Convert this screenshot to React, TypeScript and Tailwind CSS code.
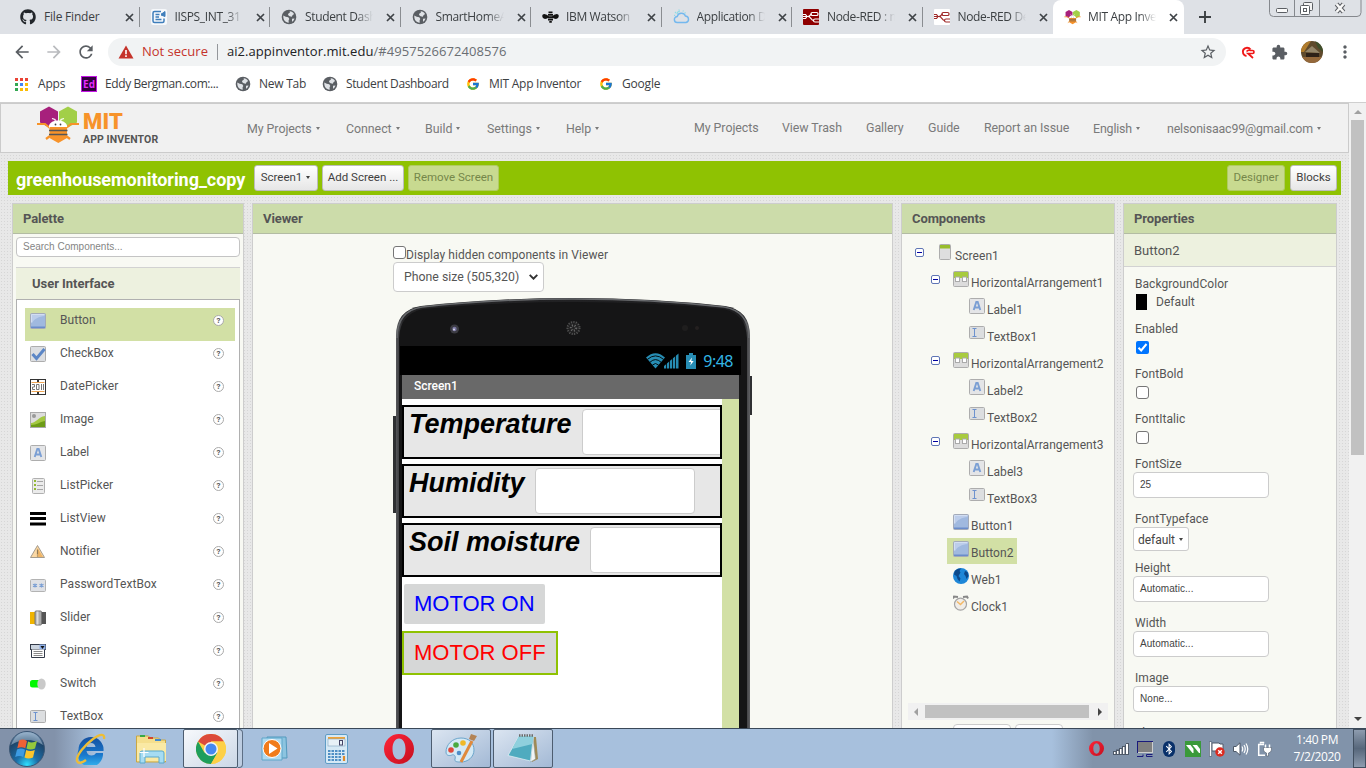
import React from "react";
import { FcGoogle } from "react-icons/fc";
import { FaGithub, FaBluetoothB } from "react-icons/fa";
import { MdExtension, MdStarBorder, MdRefresh, MdArrowBack, MdArrowForward, MdMoreVert } from "react-icons/md";

const CHROME = "font-['Open_Sans','Noto_Sans',sans-serif]";

/* ---------- small shared icons ---------- */

const Globe = () => (
  <svg className="shrink-0" width="16" height="16" viewBox="0 0 16 16">
    <circle cx="8" cy="8" r="7.3" fill="#5a5e63" />
    <path d="M8.7 2.2c1.8.2 3.6 1.2 4.4 2.8l-1.6 1.2-.7 1.6-2.2-.5-1.6-1.2.4-1.7 1.4-.6zM2.3 6.6l2.4 1.2 2.6.5 1 1.7-.7 1.3.1 2.4C4.4 13.600 2 11 2.300 6.600zM11 9.700l2.500-.3c-.4 1.500-1.300 2.600-2.500 3.300z" fill="#dfe2e6" />
  </svg>
);

const Bee = ({ w = 44, h = 37 }: { w?: number; h?: number }) => (
  <svg width={w} height={h} viewBox="0 0 44 37">
    <path d="M13 .5l9 5v11l-9 5-9-5v-11z" fill="#a7207c" />
    <path d="M32 .5l9 5v11l-9 5-9-5v-11z" fill="#a2cf48" />
    <path d="M1 18h8l5 4M43 18h-8l-5 4M14 30l-4 3M30 30l4 3" fill="none" stroke="#f7932a" strokeWidth="2.200" />
    <path d="M13 22c-1-5 4-7.500 9-7.500s10 2.500 9 7.500z" fill="#fff" />
    <path d="M16 12.500l3 1 .500 3M28 12.500l-3 1-.500 3" fill="none" stroke="#fff" strokeWidth="1.200" />
    <circle cx="19.500" cy="18.500" r=".9" fill="#444" />
    <circle cx="24.500" cy="18.500" r=".9" fill="#444" />
    <path d="M13.500 21h17.500v11l-8.700 5-8.800-5z" fill="#f7932a" />
    <path d="M13 24.500h18.500M13 28.500h18.500" stroke="#555" strokeWidth="1.600" />
  </svg>
);

const NodeRed = ({ dark }: { dark?: boolean }) => (
  <svg width="16" height="16" viewBox="0 0 16 16">
    <rect width="16" height="16" rx="1" fill={dark ? "#8f0000" : "#fff"} />
    <g fill="none" stroke={dark ? "#fff" : "#a02a2a"} strokeWidth="1.200">
      <path d="M0 7.500h5c2.500 0 2-2.500 4-2.500M5 7.500c3 0 3 4 5.500 4" />
      <rect x="8" y="3.500" width="7" height="3" rx="1.300" />
      <path d="M16 10h-4a1.500 1.500 0 000 3h4M0 5.500h2.500l1.500 2-1.500 2H0" />
    </g>
  </svg>
);

const DocIcon = () => (
  <svg width="16" height="16" viewBox="0 0 16 16">
    <rect width="16" height="16" rx="2" fill="#f6f8fb" />
    <path d="M10 2.500H3.500a1.500 1.500 0 00-1.500 1.500v8A1.500 1.500 0 003.500 13.500h8A1.500 1.500 0 0013 12V9.500" fill="none" stroke="#3f7ebb" strokeWidth="1.500" />
    <path d="M4.500 5.500h4M4.500 8h3.500M4.500 10.500h6" stroke="#3f7ebb" strokeWidth="1.300" />
    <path d="M14 2.500v5l-4-1.500zM10 5l4-2" fill="#3f7ebb" stroke="#3f7ebb" />
  </svg>
);

const WatsonBee = () => (
  <svg width="17" height="16" viewBox="0 0 17 16">
    <path d="M.3 6.500q0-1.500 2-1.500Q5 5 7 7.500 5.500 10 3 10-.2 9.500.3 6.500zM16.700 6.500q0-1.500-2-1.500Q12 5 10 7.500 11.500 10 14 10q3.200-.5 2.700-3.500z" fill="#111" />
    <path d="M6.500 3.300h4M6 5.800h5M5.500 8.200h6M6 10.500h5M7.300 12.800h2.500" stroke="#111" strokeWidth="1.800" />
  </svg>
);

const Cloud = () => (
  <svg width="17" height="16" viewBox="0 0 17 16" fill="none">
    <path d="M4.500 13.500a3 3 0 01-.3-6 4.300 4.300 0 018.200-.5 3.300 3.300 0 01.6 6.500z" stroke="#74b8ee" strokeWidth="1.400" />
    <path d="M4 5a3.500 3.500 0 013-3M2 3l1 1M6 .500V1.500M10.500 1.500l-.7 1M1 6.300h1.200M12.600 3.500l-1 .7" stroke="#8edbe6" strokeWidth="1.200" />
  </svg>
);

const Tri = () => <span className="mx-px inline-block border-x-[2.5px] border-t-[3px] border-x-transparent border-t-current" />;

/* ---------- browser chrome ---------- */

const tabs: { title: string; icon: React.ReactNode }[] = [
  { title: "File Finder", icon: <FaGithub size={16} color="#22262b" /> },
  { title: "IISPS_INT_31", icon: <DocIcon /> },
  { title: "Student Dash", icon: <Globe /> },
  { title: "SmartHomeA", icon: <Globe /> },
  { title: "IBM Watson", icon: <WatsonBee /> },
  { title: "Application D", icon: <Cloud /> },
  { title: "Node-RED : m", icon: <NodeRed dark /> },
  { title: "Node-RED De", icon: <NodeRed /> },
  { title: "MIT App Inve", icon: <Bee w={17} h={16} /> },
];

const TabStrip = () => (
  <div className={`flex h-[34px] shrink-0 bg-[#dee1e6] pl-[9px] text-[12px] text-[#3c4043] ${CHROME}`}>
    {tabs.map((t, i) => {
      const active = i === 8;
      return (
        <div
          key={t.title}
          className={`flex w-[130.5px] shrink-0 items-center pl-[11px] ${active ? "rounded-t-lg bg-white" : ""}`}
        >
          <span className="flex w-6 shrink-0">{t.icon}</span>
          <span className={`w-[68px] overflow-hidden whitespace-nowrap ${i === 0 ? "tracking-[-0.2px]" : "tracking-[-0.35px] [mask-image:linear-gradient(90deg,#000_75%,transparent)]"}`}>{t.title}</span>
          <svg className="ml-[13px] shrink-0" width="9" height="9" viewBox="0 0 9 9">
            <path d="M1 1l7 7M8 1l-7 7" stroke="#3f4347" strokeWidth="1.700" />
          </svg>
          {i < 7 && <span className="ml-auto h-5 w-px bg-[#8a8d91]" />}
        </div>
      );
    })}
    <svg className="mt-[11px] ml-[15px]" width="12" height="12" viewBox="0 0 12 12">
      <path d="M6 0v12M0 6h12" stroke="#3c4043" strokeWidth="1.900" />
    </svg>
    <svg className="mr-[4px] ml-auto" width="94" height="17" viewBox="0 0 94 17" fill="none">
      <path d="M1.500 0v12.500a4 4 0 004 4h83.500a4 4 0 004-4V0M26.500 0v16M51.500 0v16" stroke="#85888d" />
      <rect x="8.500" y="8.500" width="11" height="4" rx="1" stroke="#5b5e63" fill="#fafafa" />
      <rect x="35.500" y="2.500" width="9" height="8" rx="1" stroke="#5b5e63" fill="#f4f4f4" />
      <rect x="32.500" y="5.500" width="9" height="9" rx="1" stroke="#5b5e63" fill="#fff" />
      <rect x="35.500" y="8.500" width="3" height="3" stroke="#5b5e63" />
      <path d="M68.500 4l7 8M75.500 4l-7 8" stroke="#5b5e63" strokeWidth="4.600" />
      <path d="M68.500 4l7 8M75.500 4l-7 8" stroke="#f8f8f8" strokeWidth="2.600" />
    </svg>
  </div>
);

const Toolbar = () => (
  <div className={`flex h-9 shrink-0 items-center bg-white ${CHROME}`}>
    <MdArrowBack className="ml-3 shrink-0" size={20} color="#5a5e63" />
    <MdArrowForward className="ml-3 shrink-0" size={20} color="#b9bbbe" />
    <MdRefresh className="ml-3 shrink-0" size={20} color="#5a5e63" />
    <div className="ml-3 flex h-7 w-[1118px] shrink-0 items-center rounded-full bg-[#f1f3f4] pl-[10px] whitespace-nowrap">
      <svg width="16" height="14" viewBox="0 0 16 14">
        <path d="M8 .5l7.500 13H.5z" fill="#c5332b" />
        <path d="M8 5v4.200M8 10.300v1.700" stroke="#fff" strokeWidth="1.600" />
      </svg>
      <span className="ml-2 w-[68px] text-[13px] text-[#c5332b]">Not secure</span>
      <span className="ml-[7px] h-4 w-px bg-[#94979b]" />
      <span className="ml-[9px] text-[13px] tracking-[0.05px] text-[#202124]">
        ai2.appinventor.mit.edu<span className="text-[#6a6e73]">/#4957526672408576</span>
      </span>
      <MdStarBorder className="mr-[9px] ml-auto" size={18} color="#5a5e63" />
    </div>
    <svg className="ml-[15px] shrink-0" width="14" height="13" viewBox="0 0 14 13" fill="none">
      <path d="M5.500 10A4.200 4.200 0 119.500 3.500" stroke="#f01818" strokeWidth="2" />
      <path d="M5.500 5.500q2-2 4-1h2a1.500 1.500 0 010 3H7l5 4.500" stroke="#f01818" strokeWidth="1.700" />
    </svg>
    <MdExtension className="ml-[16px] shrink-0" size={17} color="#5a5e63" />
    <svg className="ml-[13px] shrink-0" width="22" height="22" viewBox="0 0 22 22">
      <defs>
        <clipPath id="av"><circle cx="11" cy="11" r="11" /></clipPath>
      </defs>
      <g clipPath="url(#av)">
        <rect width="22" height="22" fill="#5f4a2c" />
        <path d="M0 0h10L3 11H0z" fill="#b07c2c" />
        <path d="M14 0h8v11l-5-4z" fill="#3f4f2b" />
        <path d="M4 11l7-6 8 7z" fill="#94866a" />
        <path d="M5 12h13v4H5z" fill="#2e2117" />
        <path d="M0 16h22v6H0z" fill="#94683a" />
      </g>
    </svg>
    <MdMoreVert className="ml-[12px] shrink-0" size={20} color="#5a5e63" />
  </div>
);

const appDots = ["#ea4335", "#ea4335", "#ea4335", "#34a853", "#4285f4", "#fbbc04", "#34a853", "#fbbc04", "#fbbc04"];

const Bookmarks = () => (
  <div className={`flex h-8 shrink-0 items-center bg-white pb-1 text-[12px] whitespace-nowrap text-[#3c4043] ${CHROME}`}>
    <span className="ml-[15px] grid grid-cols-3 gap-[2px]">
      {appDots.map((c, i) => (
        <span key={i} className="h-[3px] w-[3px]" style={{ background: c }} />
      ))}
    </span>
    <span className="ml-[10px] w-[43px] tracking-[-0.2px]">Apps</span>
    <span className="flex h-4 w-4 items-center justify-center border border-[#c516e6] bg-[#33003f] text-[10px] font-bold text-[#e62bff]">Ed</span>
    <span className="ml-2 w-[130px] tracking-[-0.4px]">Eddy Bergman.com:...</span>
    <Globe />
    <span className="ml-2 w-[63px] tracking-[-0.25px]">New Tab</span>
    <Globe />
    <span className="ml-2 w-[120px] tracking-[-0.37px]">Student Dashboard</span>
    <FcGoogle size={14} />
    <span className="ml-[9px] w-[110px] tracking-[-0.27px]">MIT App Inventor</span>
    <FcGoogle size={14} />
    <span className="ml-[9px] tracking-[-0.2px]">Google</span>
  </div>
);

/* ---------- site header ---------- */

const menuLeft: [string, string][] = [
  ["My Projects", "w-[99px]"],
  ["Connect", "w-[79px]"],
  ["Build", "w-[62px]"],
  ["Settings", "w-[79px]"],
  ["Help", "w-[128px]"],
];
const menuRight: [string, string, boolean][] = [
  ["My Projects", "w-[88px]", false],
  ["View Trash", "w-[84px]", false],
  ["Gallery", "w-[62px]", false],
  ["Guide", "w-[56px]", false],
  ["Report an Issue", "w-[109px]", false],
  ["English", "w-[74px]", true],
  ["nelsonisaac99@gmail.com", "w-[170px]", true],
];

const SiteHeader = () => (
  <div className="flex h-[50px] w-[1349px] shrink-0 items-center border border-[#cbcbcb] bg-[#f1f1f1] pl-[35px] text-[12.400px] tracking-[-0.05px] whitespace-nowrap text-[#7a7a7a]">
    <div className="-mt-[7px]"><Bee /></div>
    <div className="mt-px ml-[3px] w-[164px]">
      <div className="h-[22px] text-[22px] leading-[22px] font-black tracking-[0.2px] text-[#f7932a] font-[Roboto,sans-serif]">MIT</div>
      <div className="h-[14px] text-[10.500px] leading-[14px] font-bold tracking-[0.1px] text-[#555]">APP INVENTOR</div>
    </div>
    {menuLeft.map(([t, w]) => (
      <span key={t} className={`flex shrink-0 items-center gap-[3px] pt-[2px] ${w}`}>{t} <Tri /></span>
    ))}
    {menuRight.map(([t, w, drop]) => (
      <span key={t} className={`flex shrink-0 items-center gap-[3px] ${w} ${drop ? "pt-[2px] tracking-[-0.15px]" : ""}`}>{t} {drop && <Tri />}</span>
    ))}
  </div>
);

const BarButton = ({ children, className, off }: { children: React.ReactNode; className: string; off?: boolean }) => (
  <span
    className={`flex h-[26px] items-center justify-center rounded-[3px] border pb-px text-[11.500px] whitespace-nowrap ${
      off ? "border-[#b0cb63] bg-[#c8da90] text-[#75874a]" : "border-[#bdbdbd] bg-linear-to-b from-white to-[#e6e6e6] text-[#3f3f3f]"
    } ${className}`}
  >
    {children}
  </span>
);

const ProjectBar = () => (
  <div className="mx-2 mt-2 flex h-[34px] shrink-0 items-start bg-[#8fc202] pt-[4px]">
    <span className="ml-2 w-[238px] pt-[2px] text-[18px] leading-[26px] font-bold tracking-[-0.05px] text-white">greenhousemonitoring_copy</span>
    <BarButton className="w-16 gap-[3px]">Screen1 <Tri /></BarButton>
    <BarButton className="ml-1 w-[82px]">Add Screen ...</BarButton>
    <BarButton off className="ml-1 w-[91px]">Remove Screen</BarButton>
    <BarButton off className="ml-auto w-[58px]">Designer</BarButton>
    <BarButton className="mr-1 ml-[5px] w-[47px]">Blocks</BarButton>
  </div>
);

/* ---------- component icons ---------- */

type Kind =
  | "Button" | "CheckBox" | "DatePicker" | "Image" | "Label" | "ListPicker" | "ListView" | "Notifier"
  | "PasswordTextBox" | "Slider" | "Spinner" | "Switch" | "TextBox" | "Screen" | "Arrangement" | "Web" | "Clock";

const art: Record<Kind, React.ReactNode> = {
  Button: (
    <>
      <rect x=".5" y=".5" width="15" height="15" rx="1" fill="#a0b9df" stroke="#a3aab8" />
      <path d="M1.500 1.500h13v1.500C9 3.500 4 6 2.500 9.500h-1z" fill="#bccdea" />
      <path d="M1.500 9.500V1.500h13" fill="none" stroke="#d2def2" />
      <path d="M1 13.500h14v1.500H1z" fill="#6a8ccb" />
    </>
  ),
  CheckBox: (
    <>
      <rect x=".5" y=".5" width="15" height="15" rx="1" fill="#dcdee1" stroke="#adadad" />
      <path d="M2.500 8l4 4.500L14.500 3" fill="none" stroke="#5b86c6" strokeWidth="3" />
    </>
  ),
  DatePicker: (
    <>
      <rect x=".5" y=".5" width="15" height="15" fill="#fff" stroke="#333" />
      <path d="M1.500 3.500h13M1.500 12.500h13" stroke="#eda555" />
      <path d="M8 1v2M8 13v2" stroke="#333" strokeWidth="2" />
      <path d="M2 5.500h2.500v2.500H2.500v2.500h2.500M6.500 5.500h2.500v5H6.500zM11.500 5v6M13.500 5v6" fill="none" stroke="#777" />
    </>
  ),
  Image: (
    <>
      <rect x=".5" y=".5" width="15" height="15" fill="#ddd" stroke="#aaa" />
      <circle cx="4" cy="4" r="2" fill="#999" />
      <path d="M1 11c5 0 7-6 14-7v11H1z" fill="#a3c841" />
      <path d="M1 13c6 0 8-3 14-4v6H1z" fill="#6d9c17" />
    </>
  ),
  Label: (
    <>
      <rect x=".5" y=".5" width="15" height="15" rx="1" fill="#e4e5e7" stroke="#adadad" />
      <path d="M4.700 12L7.300 4h1.400l2.600 8M5.500 9.500h5" fill="none" stroke="#7b9fd4" strokeWidth="1.900" />
    </>
  ),
  ListPicker: (
    <>
      <rect x="2.500" y=".5" width="12" height="15" rx="1" fill="#ebebeb" stroke="#b0b0b0" />
      <path d="M4 3h2M4 7h2M4 11h2" stroke="#93b834" strokeWidth="2" />
      <path d="M7 3.500h6M7 7.500h6M7 11.500h6" stroke="#a5a5a5" />
    </>
  ),
  ListView: <path d="M0 2.500h16M0 7.500h16M0 13h16" stroke="#000" strokeWidth="3.200" />,
  Notifier: (
    <>
      <path d="M7.500 1.500l7 12H.5z" fill="#fbd8a4" stroke="#a59b8c" />
      <path d="M7.500 4l5.500 9h-5.500z" fill="#f0b566" />
      <path d="M7.500 5.500v5M7.500 11.500v1" stroke="#8f7a58" strokeWidth="1.200" />
    </>
  ),
  PasswordTextBox: (
    <>
      <rect x=".5" y="2.500" width="15" height="12" rx="1" fill="#dfe1e5" stroke="#b3b3b3" />
      <path d="M5 6.500v4M3 7.200l4 2.600M7 7.200l-4 2.600M11.500 6.500v4M9.500 7.200l4 2.600M13.500 7.200l-4 2.600" stroke="#7b9fd4" strokeWidth="1.100" />
    </>
  ),
  Slider: (
    <>
      <rect x="0" y="2" width="5" height="12" fill="#f0b400" />
      <rect x="11" y="2" width="5" height="12" fill="#555" />
      <rect x="5" y="1" width="6.500" height="14" rx="1" fill="#aaa" stroke="#777" />
      <path d="M7.500 1.500v13" stroke="#ddd" strokeWidth="2" />
    </>
  ),
  Spinner: (
    <>
      <rect x=".5" y="1.500" width="15" height="5" fill="#ccd5e0" stroke="#333a48" />
      <rect x="9.500" y="1.500" width="6" height="5" fill="#8fb0e8" />
      <path d="M10.500 3h4L12.500 6z" fill="#111" />
      <path d="M1.500 6.500v8h13v-8" fill="#fff" stroke="#333a48" />
      <path d="M3.500 8.500h9M3.500 10.500h9M3.500 12.500h9" stroke="#8a8a8a" />
    </>
  ),
  Switch: (
    <>
      <rect x="0" y="4" width="12" height="7.500" rx="2.500" fill="#00f800" />
      <ellipse cx="11.500" cy="8" rx="4.200" ry="5.500" fill="#c9c9c9" />
    </>
  ),
  TextBox: (
    <>
      <rect x=".5" y="1.500" width="15" height="12" rx="1" fill="#dcdee0" stroke="#adadad" />
      <path d="M3.500 3.500h4M3.500 11.500h4M5.500 3.500v8" stroke="#6d92ce" fill="none" />
    </>
  ),
  Screen: (
    <>
      <rect x="2.500" y=".5" width="11" height="15" rx="1" fill="#dedede" stroke="#adadad" />
      <path d="M3 1h10v3.500H3z" fill="#98bd2b" />
    </>
  ),
  Arrangement: (
    <>
      <rect x=".5" y=".5" width="15" height="15" rx="1" fill="#dcdcdc" stroke="#adadad" />
      <path d="M1 1h14v6H1z" fill="#a8cb3e" />
      <rect x="2.500" y="6" width="4" height="4.500" fill="#fff" stroke="#aaa" />
      <rect x="9.500" y="6" width="4" height="4.500" fill="#fff" stroke="#aaa" />
    </>
  ),
  Web: (
    <>
      <circle cx="8" cy="8" r="8" fill="#1e87d8" />
      <path d="M1.500 3.500C3 1 6 .200 8 .500l-1.500 2.500 1 1.500L5.500 8l2 2.500-1 3L4.500 11 3.500 8 1 6.500zM12 3l2.500 1 1 4-2 3-1-3-1.500-2z" fill="#0c4a8c" />
    </>
  ),
  Clock: (
    <>
      <path d="M0 3.500L1 1.500l4 .5M15 3.500l-1-2-4 .5" fill="none" stroke="#888" strokeWidth="2" />
      <circle cx="7.500" cy="9.200" r="6" fill="#f0ede8" stroke="#a5a5a5" strokeWidth="1.200" />
      <path d="M4 6.500l3.500 3 3.500-3.500" fill="none" stroke="#f3b866" strokeWidth="1.500" />
    </>
  ),
};

const Icon = ({ kind }: { kind: Kind }) => (
  <svg className="shrink-0" width="16" height="16" viewBox="0 0 16 16">{art[kind]}</svg>
);

/* ---------- panels ---------- */

const Panel = ({ title, className, children }: { title: string; className: string; children: React.ReactNode }) => (
  <section className={`flex h-[540px] shrink-0 flex-col border border-[#cdcdcd] bg-[#f8f9f3] ${className}`}>
    <h2 className="flex h-[30px] shrink-0 items-center border-b border-[#b3bca3] bg-[#ccdcaa] pl-[10px] text-[13px] font-bold tracking-[-0.1px] text-[#555]">{title}</h2>
    {children}
  </section>
);

const paletteItems: Kind[] = [
  "Button", "CheckBox", "DatePicker", "Image", "Label", "ListPicker", "ListView", "Notifier",
  "PasswordTextBox", "Slider", "Spinner", "Switch", "TextBox",
];

const HelpIcon = () => (
  <span className="mt-[2px] mr-[11px] ml-auto flex h-[11px] w-[11px] items-center justify-center rounded-full border border-[#aaa] bg-white text-[8px] leading-none font-bold text-[#555]">?</span>
);

const Palette = () => (
  <Panel title="Palette" className="w-[232px]">
    <div className="mx-[3px] mt-[3px] flex h-5 shrink-0 items-center rounded border border-[#c4c4c4] bg-white pb-px pl-[6px] text-[10px] text-[#858585] font-['Liberation_Sans',sans-serif]">
      Search Components...
    </div>
    <div className="mx-[3px] mt-[10px] flex h-8 shrink-0 items-center border-t border-[#d2d2d2] bg-[#edf1df] pl-4 text-[13px] font-bold tracking-[-0.04px] text-[#555]">
      User Interface
    </div>
    <div className="mx-[3px] flex-1 border border-[#b0b0b0] bg-white pt-2 pr-1 pl-2">
      {paletteItems.map((k, i) => (
        <div key={k} className={`flex h-[33px] items-start pt-[5px] pl-[5px] ${i === 0 ? "bg-[#d2e0a5]" : ""}`}>
          <Icon kind={k} />
          <span className="ml-[14px] text-[12px] leading-[15px] tracking-[0.05px] text-[#555]">{k}</span>
          <HelpIcon />
        </div>
      ))}
    </div>
  </Panel>
);

const phoneRows: [string, string][] = [
  ["Temperature", "w-[173px]"],
  ["Humidity", "w-[126px]"],
  ["Soil moisture", "w-[181px]"],
];

const Phone = () => (
  <div className="relative mt-[6px] ml-[140px] h-[440px] w-[360px]">
    <svg className="absolute inset-0" width="360" height="440" viewBox="0 0 360 440">
      <defs>
        <linearGradient id="edge" x1="0" x2="1">
          <stop offset="0" stopColor="#56575a" />
          <stop offset=".02" stopColor="#242426" />
          <stop offset=".98" stopColor="#1e1e20" />
          <stop offset="1" stopColor="#606164" />
        </linearGradient>
      </defs>
      <path d="M0 118h4v97H0z" fill="#303133" />
      <path d="M355 78h4v39h-4z" fill="#303133" />
      <path d="M3 440V38Q3 12 28 8Q100 0 180 0Q260 0 332 8Q357 12 357 38V440z" fill="url(#edge)" />
      <path d="M4 40Q4 13 29 9Q100 1 180 1Q260 1 331 9Q356 13 356 40" fill="none" stroke="#67696c" strokeWidth="1.500" />
      <path d="M6 440V40Q7 16 30 11Q100 4 180 4Q260 4 330 11Q353 16 354 40V440z" fill="#151516" />
      <circle cx="61.500" cy="31" r="4.500" fill="#3b3b42" />
      <circle cx="61.500" cy="31" r="2.200" fill="#77749f" />
      <circle cx="61" cy="31.500" r="1" fill="#d8d8e8" />
      <circle cx="180.500" cy="30" r="7" fill="#202021" />
      <circle cx="180.500" cy="30" r="6" fill="none" stroke="#555" strokeWidth="2" strokeDasharray="1 1.500" />
      <circle cx="180.500" cy="30" r="2.500" fill="none" stroke="#666" strokeWidth="2.500" strokeDasharray="1 1.500" />
      <circle cx="292" cy="30" r="3" fill="#1f1e1e" />
      <circle cx="304" cy="30" r="2" fill="#242020" />
    </svg>
    <div className="relative mx-[7px] flex h-full flex-col pt-12 pr-[5px]">
      <div className="flex h-[29px] shrink-0 items-center justify-end bg-black pr-[8px] text-[#33b5e5]">
        <svg width="33" height="16" viewBox="0 0 33 16">
          <path d="M0 4.500Q9.500-4 19 4.500L9.500 15.500z" fill="#278db4" />
          <path d="M1.500 6.300Q9.500-.5 17.500 6.300M4 9.200Q9.500 4 15 9.200M6.500 12Q9.500 9 12.500 12" fill="none" stroke="#000" strokeWidth=".9" />
          <path d="M18 15.500v-2.500l14.500-12.500v15z" fill="#278db4" />
          <path d="M20.500 6v10M23.500 4v12M26.500 2v14M29.500 0v16" stroke="#000" strokeWidth=".8" />
        </svg>
        <svg className="ml-[7px]" width="10" height="16" viewBox="0 0 10 16">
          <path d="M0 2h3V0h4v2h3v14H0z" fill="#278db4" />
          <path d="M6 4.500L2.500 9H5l-.7 3.500L7.700 8H5.300z" fill="#fff" />
        </svg>
        <span className="ml-[7px] text-[16px] tracking-[-0.5px] font-['Noto_Sans',sans-serif]">9:48</span>
      </div>
      <div className="mx-[2px] h-6 shrink-0 bg-[#696969] pl-3 text-[12px] leading-[22px] font-medium tracking-[-0.05px] text-white">Screen1</div>
      <div className="mx-[2px] flex flex-1 bg-[#d2e0a5]">
        <div className="w-[320px] bg-white pt-[6px]">
          {phoneRows.map(([label, w]) => (
            <div key={label} className="mb-[5px] flex h-[54px] overflow-hidden border-2 border-black bg-[#e7e7e7] pt-[2px] pl-[5px]">
              <span className={`shrink-0 text-[27px] leading-[30px] font-bold whitespace-nowrap text-black italic font-['Liberation_Sans',sans-serif] ${w}`}>{label}</span>
              <span className="h-[46px] w-40 shrink-0 rounded border border-[#ccc] bg-white" />
            </div>
          ))}
          <div className="mt-[7px] ml-[2px] h-10 w-[141px] rounded-[2px] bg-[#d6d7d7] pl-[10px] text-[22px] leading-[39px] whitespace-nowrap text-[#00f] font-['Liberation_Sans',sans-serif]">MOTOR ON</div>
          <div className="mt-[7px] h-11 w-[156px] border-2 border-[#8fc202] bg-[#d6d7d7] pl-[10px] text-[22px] leading-[39px] whitespace-nowrap text-[#f00] font-['Liberation_Sans',sans-serif]">MOTOR OFF</div>
        </div>
      </div>
    </div>
  </div>
);

const Viewer = () => (
  <Panel title="Viewer" className="ml-2 w-[641px]">
    <div className="mt-[12px] ml-[140px] flex h-4 shrink-0 items-center text-[12px] text-[#555]">
      <span className="mb-[3px] h-[13px] w-[13px] rounded-[3px] border border-[#767676] bg-white" />
      <span className="pt-[2px] tracking-[0.07px] whitespace-nowrap">Display hidden components in Viewer</span>
    </div>
    <div className="ml-[140px] flex h-[30px] w-[151px] shrink-0 items-center rounded border border-[#ccc] bg-white pl-[10px] text-[12.300px] text-[#555]">
      Phone size (505,320)
      <svg className="mr-[5px] ml-auto" width="9" height="6" viewBox="0 0 9 6">
        <path d="M.7.8l3.800 3.900L8.300.8" fill="none" stroke="#333" strokeWidth="1.900" />
      </svg>
    </div>
    <Phone />
  </Panel>
);

const tree: [string, Kind, number, boolean][] = [
  ["Screen1", "Screen", 0, true],
  ["HorizontalArrangement1", "Arrangement", 1, true],
  ["Label1", "Label", 2, false],
  ["TextBox1", "TextBox", 2, false],
  ["HorizontalArrangement2", "Arrangement", 1, true],
  ["Label2", "Label", 2, false],
  ["TextBox2", "TextBox", 2, false],
  ["HorizontalArrangement3", "Arrangement", 1, true],
  ["Label3", "Label", 2, false],
  ["TextBox3", "TextBox", 2, false],
  ["Button1", "Button", 1, false],
  ["Button2", "Button", 1, false],
  ["Web1", "Web", 1, false],
  ["Clock1", "Clock", 1, false],
];
const indents = ["pl-[13px]", "pl-[29px]", "pl-[45px]"];

const Components = () => (
  <Panel title="Components" className="ml-2 w-[214px]">
    <div className="h-[469px] shrink-0 pt-[7px]">
      {tree.map(([name, kind, depth, open]) => (
        <div key={name} className={`flex h-[27px] items-start ${indents[depth]}`}>
          <span className="mt-[7px] flex h-[9px] w-[9px] shrink-0 items-center justify-center">
            {open && (
              <span className="flex h-[9px] w-[9px] items-center justify-center rounded-[2px] border border-[#5f75b5] bg-white">
                <span className="h-px w-[5px] bg-[#0000a0]" />
              </span>
            )}
          </span>
          <span className={`ml-[7px] flex h-[26px] items-start pt-[3px] pr-1 pl-[6px] ${name === "Button2" ? "bg-[#d2e0a5]" : ""}`}>
            <Icon kind={kind} />
            <span className="ml-[2px] pt-[4px] text-[12px] leading-[16px] tracking-[0.06px] text-[#555]">{name}</span>
          </span>
        </div>
      ))}
    </div>
    <div className="mr-[6px] ml-[6px] flex h-[17px] shrink-0 items-center bg-[#f1f1f1]">
      <svg className="ml-[6px]" width="4" height="8" viewBox="0 0 4 8"><path d="M4 0v8L0 4z" fill="#a0a0a0" /></svg>
      <span className="ml-[7px] h-[13px] w-[164px] bg-[#c1c1c1]" />
      <svg className="ml-[9px]" width="4" height="8" viewBox="0 0 4 8"><path d="M0 0v8l4-4z" fill="#444" /></svg>
    </div>
    <div className="mt-1 ml-[51px] flex gap-1">
      <span className="h-6 w-[58px] rounded border border-[#ccc] bg-white" />
      <span className="h-6 w-12 rounded border border-[#ccc] bg-white" />
    </div>
  </Panel>
);

const Check = ({ label, on }: { label: string; on?: boolean }) => (
  <div className="h-[45px]">
    <div className="pl-[2px] text-[12px] leading-4">{label}</div>
    {on ? (
      <svg className="mt-1 ml-[3px]" width="13" height="13" viewBox="0 0 13 13">
        <rect width="13" height="13" rx="2" fill="#0075ff" />
        <path d="M2.500 6.800l2.700 2.700 5.300-6.500" fill="none" stroke="#fff" strokeWidth="2" />
      </svg>
    ) : (
      <div className="mt-1 ml-[3px] h-[13px] w-[13px] rounded-[3px] border border-[#767676] bg-white" />
    )}
  </div>
);

const Field = ({ label, value }: { label: string; value: string }) => (
  <div className="h-[55px]">
    <div className="pl-[2px] text-[12px] leading-4">{label}</div>
    <div className="flex h-[26px] w-[136px] items-center rounded border border-[#ccc] bg-white pb-px pl-[6px] text-[10px] text-[#444] font-['Liberation_Sans',sans-serif]">{value}</div>
  </div>
);

const Properties = () => (
  <Panel title="Properties" className="ml-2 w-[214px]">
    <div className="flex h-[33px] shrink-0 items-center border-b border-[#d2d2d2] bg-[#edf1df] pt-px pl-[10px] text-[13px] text-[#555]">Button2</div>
    <div className="pt-[9px] pl-[9px] tracking-[0.06px] text-[#555]">
      <div className="h-[45px]">
        <div className="pl-[2px] text-[12px] leading-4">BackgroundColor</div>
        <div className="mt-[2px] ml-[3px] flex h-4 items-center text-[12px]">
          <span className="mr-[9px] h-4 w-[11px] bg-black" />
          Default
        </div>
      </div>
      <Check label="Enabled" on />
      <Check label="FontBold" />
      <Check label="FontItalic" />
      <Field label="FontSize" value="25" />
      <div className="h-[49px]">
        <div className="pl-[2px] text-[12px] leading-4">FontTypeface</div>
        <div className="flex h-6 w-14 items-center justify-center gap-[3px] rounded-[3px] border border-[#ccc] bg-white pt-px text-[12px] tracking-[-0.05px] text-[#444]">default <Tri /></div>
      </div>
      <Field label="Height" value="Automatic..." />
      <Field label="Width" value="Automatic..." />
      <Field label="Image" value="None..." />
      <Field label="Shape" value="default" />
    </div>
  </Panel>
);

/* ---------- taskbar ---------- */

const OperaIcon = ({ size }: { size: number }) => (
  <svg width={size} height={size} viewBox="0 0 30 30">
    <defs>
      <linearGradient id="op" x1="0" x2="1" y1="0" y2="1">
        <stop offset="0" stopColor="#ff2438" />
        <stop offset="1" stopColor="#c4101f" />
      </linearGradient>
    </defs>
    <path fillRule="evenodd" d="M15 0a15 15 0 100 30 15 15 0 000-30zM15 4.500c4 0 6.500 4.500 6.500 10.500S19 25.500 15 25.500 8.500 21 8.500 15 11 4.500 15 4.500z" fill="url(#op)" />
  </svg>
);

const Start = () => (
  <svg width="38" height="38" viewBox="0 0 38 38">
    <defs>
      <radialGradient id="orb" cx=".5" cy=".95" r=".9">
        <stop offset="0" stopColor="#2fe0ff" />
        <stop offset=".35" stopColor="#1c6ea8" />
        <stop offset=".8" stopColor="#1d4468" />
        <stop offset="1" stopColor="#6a8cad" />
      </radialGradient>
    </defs>
    <circle cx="19" cy="19" r="17.500" fill="url(#orb)" stroke="#3b5674" />
    <path d="M3 15Q19 5 35 15Q30 2 19 2Q8 2 3 15z" fill="#b9cde0" opacity=".5" />
    <path d="M11 10.500q4-2 8 .5l-1.700 7.200q-4-2-8 0z" fill="#ee6135" />
    <path d="M20 11.500q4 2 9-.5l-2 7.500q-4.500 2-8.500 0z" fill="#94c83c" />
    <path d="M9 19.500q4-2 8 .2L15.200 27q-4-2-8 0z" fill="#3d9be3" />
    <path d="M18.200 20q4 2 8.600 0L25 27.500q-4.500 2-8.500 0z" fill="#fbc52c" />
  </svg>
);

const IE = () => (
  <svg width="32" height="32" viewBox="0 0 32 32" fill="none">
    <defs>
      <linearGradient id="ie" x1="0" x2="0" y1="0" y2="1">
        <stop offset="0" stopColor="#1550a0" />
        <stop offset=".6" stopColor="#1a78cc" />
        <stop offset="1" stopColor="#35b5f0" />
      </linearGradient>
    </defs>
    <path fillRule="evenodd" d="M17 4a12.500 12.500 0 0112.500 14H12.500c.5 3 2.500 4.500 5 4.500 2 0 3.500-.8 4.500-2.500h7A12.700 12.700 0 114.500 16.500 12.500 12.500 0 0117 4zm-4.500 10h9c-.5-2.500-2-4-4.500-4s-4 1.500-4.500 4z" fill="url(#ie)" />
    <path d="M30 6c1-5-3-6-11 0S2 22 3 28c1 3 5 2 9-1" stroke="#eebd35" strokeWidth="2.300" />
  </svg>
);

const Explorer = () => (
  <svg width="33" height="30" viewBox="0 0 33 30">
    <path d="M1.500 4V2h12l2 2h8l2 2h5v22h-29z" fill="#f5df8d" stroke="#c9a744" />
    <path d="M5 1h5v2H5z" fill="#39a845" />
    <path d="M13 3h5v2h-5z" fill="#d0472f" />
    <path d="M20 5h6v2h-6z" fill="#4089d0" />
    <path d="M2 9h29v18H2z" fill="#fae9a4" />
    <path d="M5 29V19q0-2 2-2h20q2 0 2 2v10h-5v-6H10v6z" fill="#a6dcf2" stroke="#5ba9cc" />
    <path d="M9 14v9M4.500 18.500h9" stroke="#fff" strokeWidth="1.200" />
  </svg>
);

const Chrome = () => (
  <svg width="30" height="30" viewBox="0 0 30 30">
    <circle cx="15" cy="15" r="15" fill="#fdd047" />
    <path d="M15 15L2 7.500A15 15 0 0128 7.500H15z" fill="#dc4a3b" />
    <path d="M2 7.500A15 15 0 0015 30l6.500-11.200L15 15l-6.500 3.700z" fill="#1e9e5c" />
    <path d="M15 7.500H28A15 15 0 0115 30l6.500-11.200z" fill="#fdd047" />
    <circle cx="15" cy="15" r="7" fill="#f4f4f4" />
    <circle cx="15" cy="15" r="5.500" fill="#4688f1" />
  </svg>
);

const Media = () => (
  <svg width="28" height="26" viewBox="0 0 28 26">
    <path d="M6 1h19l1 21H8z" fill="#8cc4e0" stroke="#5399bd" />
    <path d="M1 2h20v22H1z" fill="#aedaf0" stroke="#5ea6c9" />
    <circle cx="11" cy="12.500" r="9" fill="#f07b1a" stroke="#fff" />
    <path d="M8 7l8.500 5.500L8 18z" fill="#fff" />
  </svg>
);

const Calc = () => (
  <svg width="23" height="30" viewBox="0 0 23 30">
    <rect x=".5" y=".5" width="22" height="29" rx="1.500" fill="#d6e9f5" stroke="#5f9cc5" />
    <rect x="3" y="3" width="17" height="2" fill="#eda33c" />
    <rect x="3" y="5" width="17" height="7" fill="#e8f1f7" stroke="#7fa5c0" strokeWidth=".6" />
    <rect x="14.500" y="6.500" width="3" height="4.500" fill="none" stroke="#446" />
    <path d="M3 17h17M3 20h17M3 23h14M3 26h14" stroke="#4f8fc4" strokeWidth="2" strokeDasharray="2.500 1" />
    <path d="M19 22v5" stroke="#e08a2a" strokeWidth="2.200" />
  </svg>
);

const Paint = () => (
  <svg width="33" height="31" viewBox="0 0 33 31">
    <path d="M16 5C7 5 1 12 1 19c0 4 4 4 6 3s4 1 3 4 3 3 6 3c7 0 13-5 13-12S24 5 16 5z" fill="#d4e9f5" stroke="#6ba5cb" />
    <circle cx="6" cy="17" r="2.800" fill="#e0493b" />
    <circle cx="11" cy="12" r="2.800" fill="#49aa3f" />
    <circle cx="18" cy="10" r="2.800" fill="#f0b928" />
    <circle cx="14" cy="20" r="2.300" fill="#4e8dc8" />
    <path d="M27 8L16 29" stroke="#e08a3c" strokeWidth="3" />
    <path d="M24 6l2-5 6 2-3 5z" fill="#b38355" />
  </svg>
);

const Notepad = () => (
  <svg width="32" height="29" viewBox="0 0 32 29">
    <path d="M26 3l3 0 2 22-6 3z" fill="#a08a54" />
    <path d="M26 3l2.500 22-5 3z" fill="#f2f4f4" stroke="#8c9a9a" strokeWidth=".6" />
    <path d="M12 2h14.500l-3 25L1 21.500z" fill="#4fabbf" stroke="#e8f4f6" strokeWidth=".7" />
    <path d="M12 2h14.500l-1 8L5 15z" fill="#8fd0dd" />
    <path d="M12 1.500h15" stroke="#6a6a6a" strokeWidth="2.500" strokeDasharray="1.500 1" />
  </svg>
);

const TaskButton = ({ children, className }: { children: React.ReactNode; className: string }) => (
  <span className={`flex h-[39px] shrink-0 items-center justify-center rounded-[2px] border border-[#4d5d70] bg-linear-to-br ${className}`}>{children}</span>
);

const Tray = () => (
  <div className="ml-auto flex h-full items-center">
    <OperaIcon size={15} />
    <svg className="ml-[9px]" width="16" height="12" viewBox="0 0 16 12">
      <path d="M0 12V8h3V6.500h3V5h3V3h3V1.500h1V0h3v12z" fill="#4e5968" />
      <path d="M1 9h1.500v2H1zM4 8h1.500v3H4zM7 6h1.500v5H7zM10 4h1.500v7H10zM13 1h2v10h-2z" fill="#fff" />
    </svg>
    <svg className="ml-2" width="16" height="16" viewBox="0 0 16 16">
      <rect x=".5" y=".5" width="15" height="11" fill="#808080" stroke="#1a1a7c" />
      <path d="M1 11.500h15M15.500 1v10" stroke="#cfcfcf" />
      <path d="M0 15.500h6v-2M15.500 15.500H9.500v-2h6" fill="none" stroke="#1a1a7c" />
    </svg>
    <span className="ml-[10px] flex h-4 w-3 items-center justify-center rounded-full bg-[#08306a] text-white"><FaBluetoothB size={12} /></span>
    <svg className="ml-[10px]" width="16" height="16" viewBox="0 0 16 16">
      <rect width="16" height="16" fill="#3a9a3a" />
      <path d="M1 4l6.500 8h1V8L5.500 4zM7.500 4l6.500 8h1V8L12 4z" fill="#fff" />
    </svg>
    <svg className="ml-2" width="16" height="16" viewBox="0 0 16 16">
      <path d="M3 2h7l1 1h3v7H3z" fill="#fff" stroke="#4e5968" />
      <path d="M1.500.5v15" stroke="#4e5968" strokeWidth="2.500" />
      <path d="M1.500 1v14" stroke="#fff" strokeWidth="1.500" />
      <circle cx="11" cy="11" r="4.700" fill="#dc2b20" />
      <path d="M9.200 9.200l3.600 3.600M12.800 9.200l-3.600 3.600" stroke="#fff" strokeWidth="1.400" />
    </svg>
    <svg className="ml-2" width="16" height="14" viewBox="0 0 16 14">
      <path d="M.5 4.500H3L7 .8v12.400L3 9.500H.5z" fill="#fff" stroke="#4e5968" />
      <path d="M9 4.500q1.500 2.500 0 5M11 3q2.500 4 0 8M13 1.500q3.500 5.500 0 11" fill="none" stroke="#fff" strokeWidth="1.200" />
    </svg>
    <svg className="ml-2" width="15" height="16" viewBox="0 0 15 16" fill="none">
      <path d="M7 3.500H1.700v10.800H8M3.500 2.500v-1h3v1" stroke="#fff" strokeWidth="1.500" />
      <path d="M6.500 6.500h8v2.500q-.5 2.500-3 3v3h-2v-3q-2.500-.5-3-3z" fill="#fff" stroke="#4e5968" strokeWidth=".6" />
      <path d="M8.500 6.500v-3M12.500 6.500v-3" stroke="#fff" strokeWidth="1.500" />
    </svg>
    <div className={`mb-[2px] ml-[14px] w-[62px] text-center text-[12px] leading-[17px] tracking-[-0.4px] text-white ${CHROME}`}>
      <div>1:40 PM</div>
      <div>7/2/2020</div>
    </div>
    <span className="ml-[5px] h-full w-[13px] border border-[#414f60] bg-linear-to-b from-[#8e9caf] via-[#57677b] to-[#8e9caf]" />
  </div>
);

const Taskbar = () => (
  <div className="flex h-10 shrink-0 items-center border-t border-[#3a4858] bg-linear-to-r from-[#8292aa] from-4% via-[#a7c0dd] via-7% to-[#a7c0dd]">
    <div className="flex h-full w-full items-center bg-linear-to-r from-transparent from-77% to-[#8193aa] to-80%">
      <span className="ml-2 w-[66px]"><Start /></span>
      <span className="w-[61px]"><IE /></span>
      <span className="w-12"><Explorer /></span>
      <TaskButton className="w-[55px] from-[#f7f9fc] to-[#cbd7e6]"><Chrome /></TaskButton>
      <span className="h-[39px] w-[5px] rounded-r border-y border-r border-[#5d6f85] bg-[#bdcde1]" />
      <span className="ml-[18px] w-16"><Media /></span>
      <span className="w-[59px]"><Calc /></span>
      <span className="w-[47px]"><OperaIcon size={30} /></span>
      <TaskButton className="w-[60px] from-[#dbe5f1] to-[#a3b9d5]"><Paint /></TaskButton>
      <TaskButton className="ml-[2px] w-[60px] from-[#dbe5f1] to-[#a3b9d5]"><Notepad /></TaskButton>
      <Tray />
    </div>
  </div>
);

const Scrollbar = () => (
  <div className="flex w-[17px] shrink-0 flex-col items-center bg-[#f1f1f1] py-[7px]">
    <svg width="8" height="4" viewBox="0 0 8 4"><path d="M0 4h8L4 0z" fill="#a0a0a0" /></svg>
    <span className="mt-[6px] h-[335px] w-[13px] bg-[#c1c1c1]" />
    <svg className="mt-auto" width="8" height="4" viewBox="0 0 8 4"><path d="M0 0h8L4 4z" fill="#444" /></svg>
  </div>
);

export default function App() {
  return (
    <div className="flex h-[768px] w-[1366px] flex-col overflow-hidden bg-white font-[Roboto,sans-serif]">
      <TabStrip />
      <Toolbar />
      <Bookmarks />
      <div className="h-px shrink-0 bg-[#cfcfcf]" />
      <div className="flex h-[625px] shrink-0 overflow-hidden">
        <div className="flex w-[1349px] shrink-0 flex-col overflow-hidden bg-[#e8e8e8] bg-[radial-gradient(#d6d6d6_0.7px,transparent_0.8px)] bg-size-[3px_3px]">
          <SiteHeader />
          <ProjectBar />
          <div className="mt-2 ml-3 flex">
            <Palette />
            <Viewer />
            <Components />
            <Properties />
          </div>
        </div>
        <Scrollbar />
      </div>
      <Taskbar />
    </div>
  );
}
